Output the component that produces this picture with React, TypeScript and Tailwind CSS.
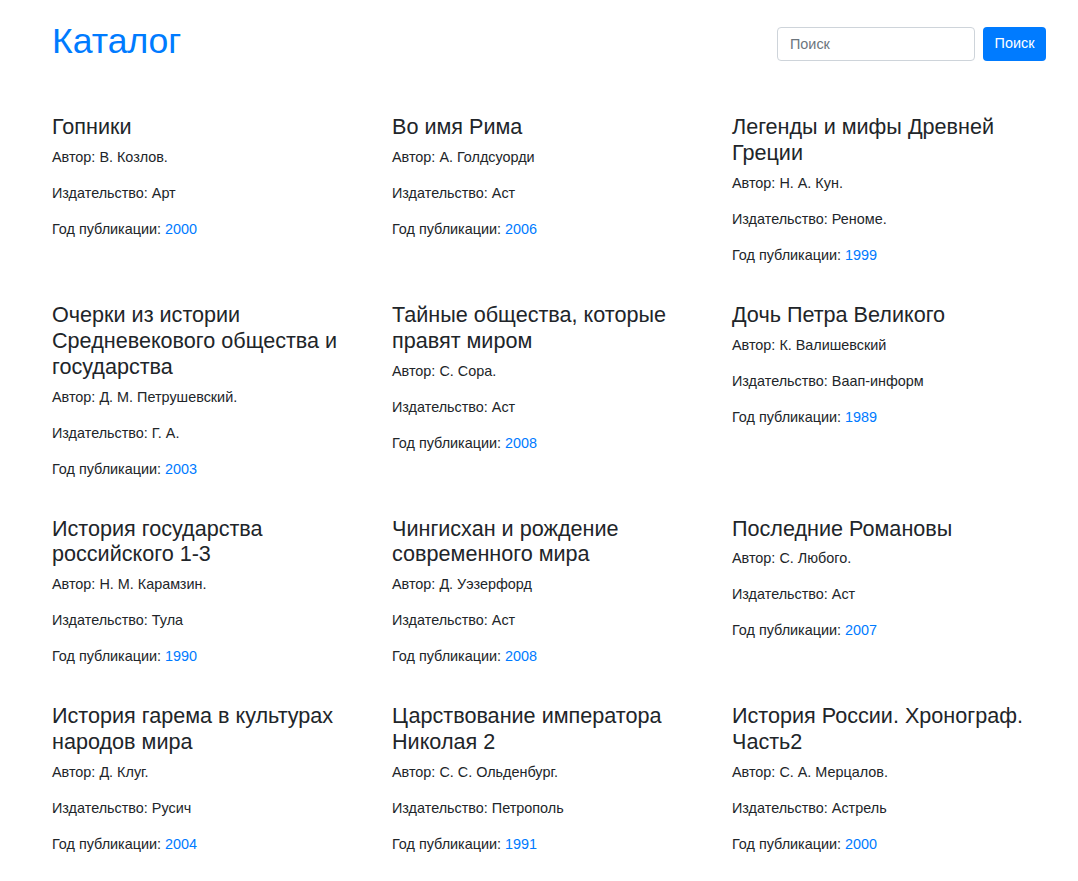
const books = [
  { title: "Гопники", author: "В. Козлов.", publisher: "Арт", year: "2000" },
  { title: "Во имя Рима", author: "А. Голдсуорди", publisher: "Аст", year: "2006" },
  { title: "Легенды и мифы Древней Греции", author: "Н. А. Кун.", publisher: "Реноме.", year: "1999" },
  {
    title: "Очерки из истории Средневекового общества и государства",
    author: "Д. М. Петрушевский.",
    publisher: "Г. А.",
    year: "2003",
  },
  { title: "Тайные общества, которые правят миром", author: "С. Сора.", publisher: "Аст", year: "2008" },
  { title: "Дочь Петра Великого", author: "К. Валишевский", publisher: "Ваап-информ", year: "1989" },
  { title: "История государства российского 1-3", author: "Н. М. Карамзин.", publisher: "Тула", year: "1990" },
  { title: "Чингисхан и рождение современного мира", author: "Д. Уэзерфорд", publisher: "Аст", year: "2008" },
  { title: "Последние Романовы", author: "С. Любого.", publisher: "Аст", year: "2007" },
  { title: "История гарема в культурах народов мира", author: "Д. Клуг.", publisher: "Русич", year: "2004" },
  { title: "Царствование императора Николая 2", author: "С. С. Ольденбург.", publisher: "Петрополь", year: "1991" },
  { title: "История России. Хронограф. Часть2", author: "С. А. Мерцалов.", publisher: "Астрель", year: "2000" },
];

type Book = (typeof books)[number];

function BookCard({ book }: { book: Book }) {
  return (
    <div className="px-[15px] pb-[21px]">
      <h4 className="text-[21.6px] leading-[1.2] font-normal mb-[7px]">{book.title}</h4>
      <p className="text-[14.4px] leading-5 mb-4">Автор: {book.author}</p>
      <p className="text-[14.4px] leading-5 mb-4">Издательство: {book.publisher}</p>
      <p className="text-[14.4px] leading-5 mb-4">
        Год публикации: <a href="#" className="text-[#007bff]">{book.year}</a>
      </p>
    </div>
  );
}

export default function App() {
  return (
    <div
      className="min-h-screen bg-white text-[#212529]"
      style={{ fontFamily: '"Liberation Sans", Arial, sans-serif' }}
    >
      <div className="w-[1020px] ml-[37px] pt-[20px]">
        {/* Header */}
        <header className="flex items-start justify-between pl-[15px] pr-[11px]">
          <h1 className="text-[35.6px] leading-[43px] font-normal text-[#007bff]">Каталог</h1>
          <form className="mt-[7px] flex gap-2" onSubmit={(e) => e.preventDefault()}>
            <input
              type="text"
              placeholder="Поиск"
              className="w-[198px] h-[34px] px-3 text-[14.4px] border border-[#ced4da] rounded placeholder:text-[#6c757d] outline-none"
            />
            <button className="w-[63px] h-[34px] text-[14.4px] text-white bg-[#007bff] rounded">Поиск</button>
          </form>
        </header>

        {/* Books */}
        <div className="mt-[51px] grid grid-cols-3">
          {books.map((b) => (
            <BookCard key={b.title} book={b} />
          ))}
        </div>
      </div>
    </div>
  );
}
